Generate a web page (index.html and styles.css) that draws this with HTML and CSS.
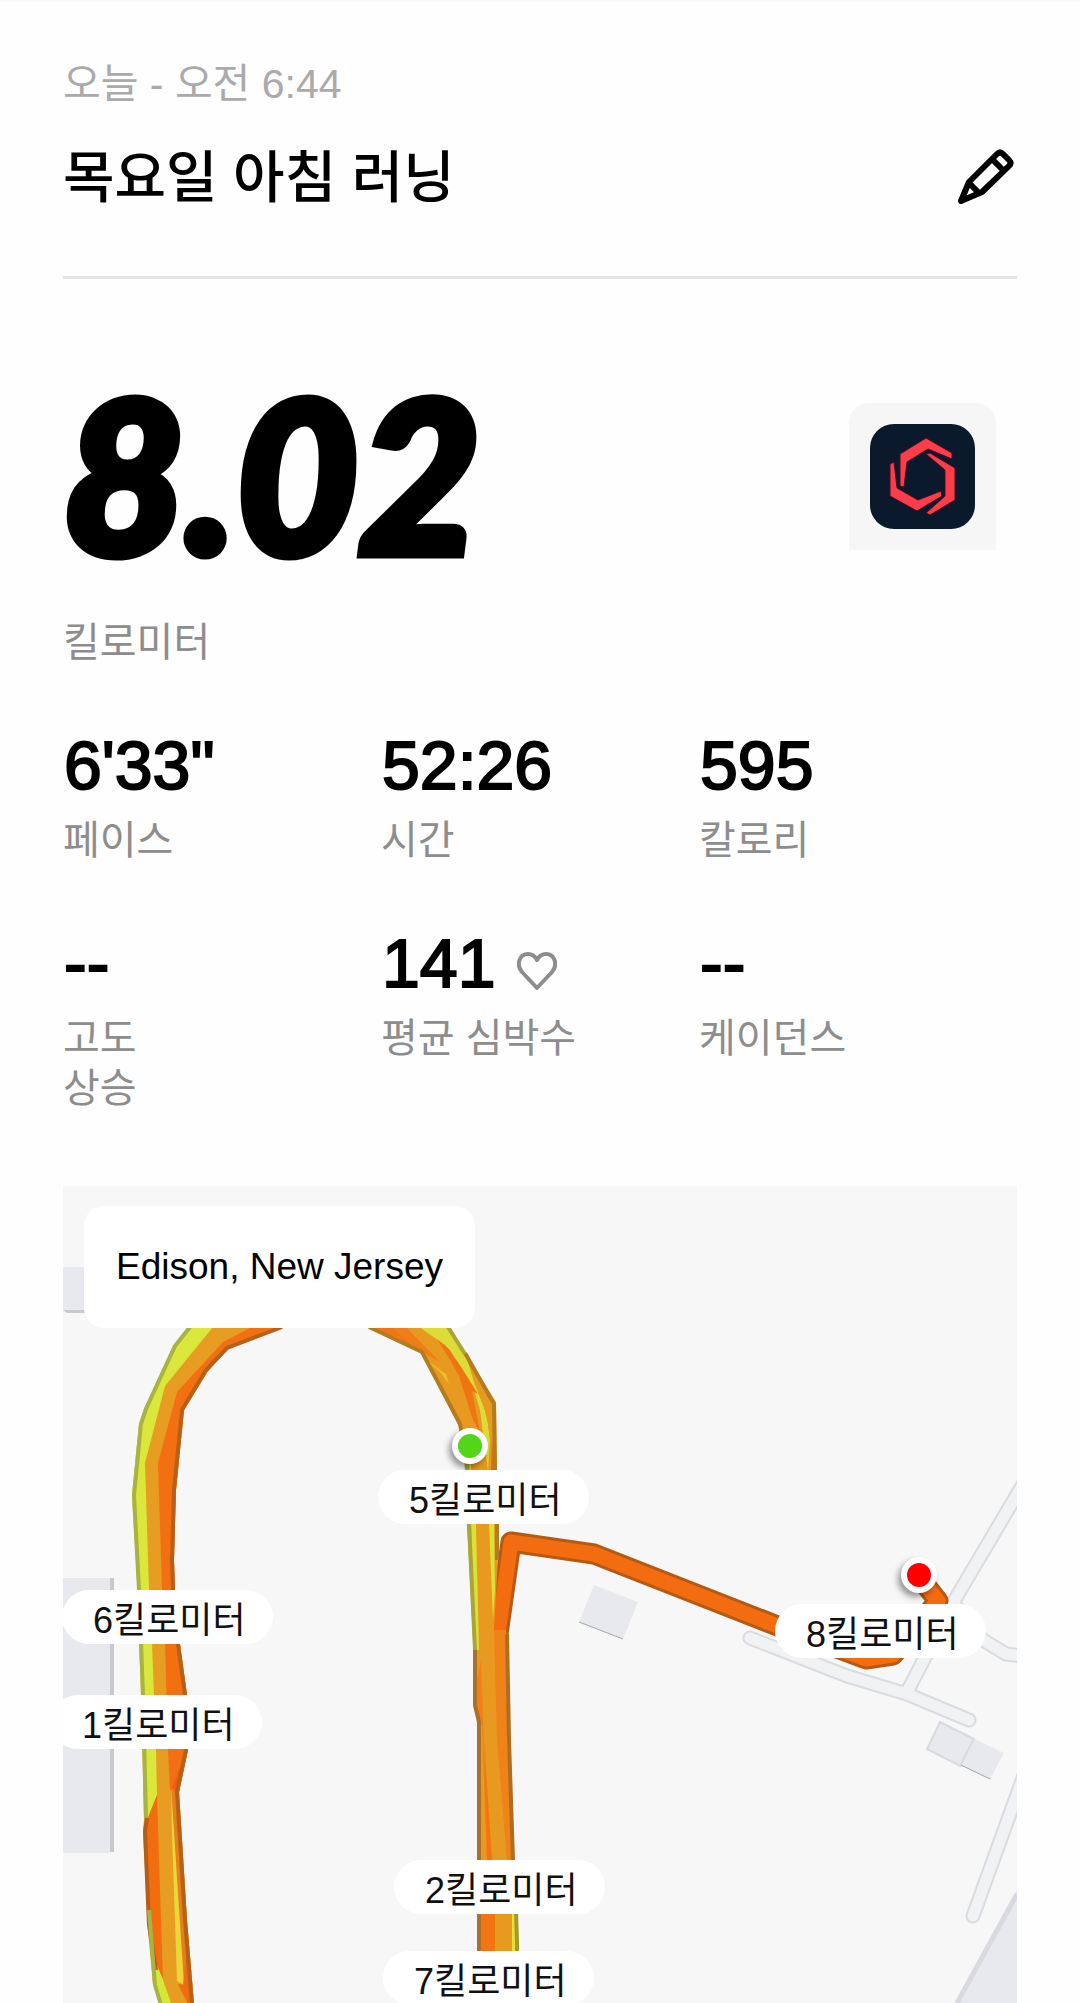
FILE: index.html
```html
<!DOCTYPE html>
<html lang="ko">
<head>
  <meta charset="UTF-8" />
  <meta name="viewport" content="width=device-width, initial-scale=1.0"/>
  <title>목요일 아침 러닝</title>
  <link rel="stylesheet" href="styles.css">
</head>
<body>

  <main class="run">
    <header class="run-header">
      <div>
        <p class="date">오늘 - 오전 6:44</p>
        <h1 class="title">목요일 아침 러닝</h1>
      </div>
      <button class="edit-btn" type="button" aria-label="편집">
        <svg viewBox="0 0 56 56" fill="none" stroke="#000" stroke-width="6" stroke-linejoin="round">
          <path d="M3 52 L11 33 L39 5 Q42 2 45 5 L51 11 Q54 14 51 17 L24 43 Z"/>
          <path d="M34 10 L46 22 M11 34 L21 44"/>
        </svg>
      </button>
    </header>

    <section class="summary">
      <div>
        <p class="distance">8.02</p>
        <p class="label">킬로미터</p>
      </div>
      <div class="badge">
        <svg viewBox="0 0 105 105">
          <rect width="105" height="105" rx="24" fill="#0a192b"/>
          <g fill="#fb3c4b" stroke="#4a0c20" stroke-width="1">
            <path d="M56 14 L82 29 L82 35 L58 25 L37 38 L34 63 L30 62 L30 30 Z"/>
            <path d="M56 30 L60 29 L85 44 L85 76 L60 91 L56 89 L75 72 L75 46 Z"/>
            <path d="M20 40 L24 38 L27 64 L48 76 L71 67 L72 72 L47 87 L20 72 Z"/>
          </g>
        </svg>
      </div>
    </section>

    <section class="stats">
      <div>
        <p class="value">6'33"</p>
        <p class="label">페이스</p>
      </div>
      <div>
        <p class="value">52:26</p>
        <p class="label">시간</p>
      </div>
      <div>
        <p class="value">595</p>
        <p class="label">칼로리</p>
      </div>
      <div>
        <p class="value">--</p>
        <p class="label">고도<br>상승</p>
      </div>
      <div>
        <p class="value">141
          <svg class="heart" viewBox="0 0 40 40" fill="none" stroke="#8d8d8d" stroke-width="4" stroke-linejoin="round">
            <path d="M20 37 L5 21 C-1 14 2 3 11 3 C15 3 18 5 20 9 C22 5 25 3 29 3 C38 3 41 14 35 21 Z"/>
          </svg>
        </p>
        <p class="label">평균 심박수</p>
      </div>
      <div>
        <p class="value">--</p>
        <p class="label">케이던스</p>
      </div>
    </section>

    <section class="map">
      <svg class="map-canvas" viewBox="63 1186 954 817">
        <!-- buildings -->
        <g fill="#e8e9ee">
          <path d="M63 1267 H90 V1311 H63 Z"/>
          <path d="M63 1578 H110 V1853 H63 Z"/>
          <path d="M594 1585 L638 1602 L623 1639 L579 1622 Z"/>
          <path d="M1017 1890 V2003 H955 Z"/>
          <path d="M975 1739 L1004 1753 L990 1779 L961 1766 Z"/>
          <path d="M940 1722 L974 1739 L960 1766 L927 1749 Z" stroke="#d8dae0" stroke-width="2"/>
        </g>
        <path d="M63 1310 H90 V1313 H67 Z M110 1578 H114 V1852 H110 Z" fill="#c8c9ce"/>
        <path d="M579 1622 L623 1639 M961 1765 L990 1779" stroke="#a5a6ab" fill="none"/>
        <path d="M1017 1894 L957 2003" stroke="#d9dae0" stroke-width="5" fill="none"/>

        <!-- roads -->
        <g fill="none" stroke-linecap="round" stroke-linejoin="round">
          <g stroke="#dadce0" stroke-width="15">
            <path d="M750 1638 L847 1676 L907 1694 L969 1720"/>
            <path d="M907 1692 L957 1596 L1025 1481"/>
            <path d="M955 1605 L983 1640 L1006 1654 L1030 1657"/>
            <path d="M973 1916 L1024 1775"/>
          </g>
          <g stroke="#f1f2f4" stroke-width="11">
            <path d="M750 1638 L847 1676 L907 1694 L969 1720"/>
            <path d="M907 1692 L957 1596 L1025 1481"/>
            <path d="M955 1605 L983 1640 L1006 1654 L1030 1657"/>
            <path d="M973 1916 L1024 1775"/>
          </g>
        </g>

        <!-- left side of the track -->
        <path fill="#e69d22" d="M188 1327 L173 1346 L144 1409 L139 1424 L132 1495 L137 1580 L141 1695 L144 1820 L143 1831 L148 1931 L153 1985 L160 2003 H194 L187 1920 L179 1792 L188 1750 L187 1695 L180 1644 L175 1590 L174 1560 L176 1490 L184 1410 L208 1371 L228 1349 L284 1327 Z"/>
        <path fill="#dbe73a" d="M188 1327 L173 1346 L144 1409 L139 1424 L132 1495 L137 1580 L141 1695 L145 1820 L148 1818 L157 1795 L156 1750 L152 1643 L149 1589 L145 1463 L165 1386 L213 1327 Z"/>
        <path fill="#f37012" d="M252 1327 L223 1342 L177 1392 L158 1463 L162 1589 L165 1643 L168 1750 L170 1790 L179 1792 L188 1750 L187 1695 L180 1644 L175 1590 L174 1560 L176 1490 L184 1410 L208 1371 L228 1349 L284 1327 Z"/>
        <path fill="#fb5a0c" d="M187 1750 L179 1792 L171 1790 Z"/>
        <path fill="#f26c10" d="M157 1795 L147 1820 L144 1832 L148 1925 L157 1968 L163 1978 L160 1890 Z"/>
        <path fill="#e5801a" d="M171 1788 L179 1792 L187 1920 L194 2003 H187 L178 1984 L183 1985 Z"/>
        <path fill="#ead83a" d="M171 1788 L175 1847 L184 1985 L177 1981 L172 1833 Z"/>
        <path fill="#f06c12" d="M178 1984 L183 1985 L187 1950 L193 2003 H188 Z"/>
        <path fill="#d5e83a" d="M157 1965 L153 1985 L160 2003 H171 L163 1980 Z"/>
        <g fill="none" stroke-width="4">
          <path stroke="#a7b443" d="M190 1327 L175 1346 L146 1409 L141 1424 L134 1495 L139 1590 L143 1695 L146 1818"/>
          <path stroke="#b45f18" d="M147 1818 L145 1831 L149 1925 L156 1970"/>
          <path stroke="#a7b443" d="M149 1910 L155 1985 L161 2005"/>
          <path stroke="#b8601a" d="M282 1327 L227 1348 L206 1370 L182 1410 L174 1490 L172 1560 L173 1590 L178 1644 L185 1695 L186 1750 L177 1792 L185 1920 L192 2005"/>
        </g>

        <!-- way out to the finish -->
        <g fill="none" stroke-linejoin="round">
          <path stroke="#b45a14" stroke-width="21" d="M498 1700 L498 1634 L511 1542 L594 1554 L775 1625 L866 1659 L893 1655 L938 1601 L917 1574"/>
          <path stroke="#f36c10" stroke-width="15" d="M498 1700 L498 1634 L511 1542 L594 1554 L775 1625 L866 1659 L893 1655 L938 1601 L917 1574"/>
        </g>

        <!-- right side of the track -->
        <path fill="#e8991f" d="M371 1327 L421 1353 L458 1424 L462 1440 L465 1470 L467 1524 L474 1660 L473 1705 L477 1720 V1960 H517 L514 1860 L510 1740 L508 1634 L494 1630 L499 1540 L497 1470 L496 1402 L465 1352 L450 1327 Z"/>
        <path fill="#f37512" d="M371 1327 H392 L418 1350 Z"/>
        <path fill="#ee7f18" d="M392 1327 H406 L440 1362 L418 1350 Z"/>
        <path fill="#dddb36" d="M419 1327 H449 L466 1356 L474 1382 L487 1416 L490 1440 L488 1470 L480 1410 L474 1390 L461 1367 L445 1345 Z"/>
        <path fill="#ee7612" d="M437 1339 L449 1349 L463 1370 L478 1394 L472 1391 L480 1432 L473 1420 L459 1376 L450 1360 Z"/>
        <path fill="#e8991f" d="M478 1380 L494 1405 L494 1470 L488 1424 Z"/>
        <path fill="#dc6f18" d="M492 1440 L495 1470 H491 Z"/>
        <path fill="#dedf38" d="M471 1524 H476 L479 1650 H475 Z M489 1524 H494 L495 1590 L493 1620 Z M466 1460 H471 V1470 H466 Z"/>
        <path fill="#e9c02c" d="M421 1356 L446 1374 L449 1384 L440 1372 Z"/>
        <path fill="#ef8218" d="M494 1630 H506 L508 1740 L512 1860 H507 L497 1740 Z M475 1690 L481 1660 L488 1860 H480 L478 1720 Z"/>
        <path fill="#e8991f" d="M477 1725 H482 L487 1860 H479 Z"/>
        <path fill="#f37512" d="M484 1740 L492 1860 H487 Z M480 1914 H495 V1960 H480 Z"/>
        <path fill="#e8e038" d="M512 1914 H515 V1960 H512 Z"/>
        <g fill="none" stroke-width="4">
          <path stroke="#b47c20" d="M369 1327 L422 1352 L460 1424 L464 1445 M465 1353 L494 1404 L495 1470 M497 1524 L497 1560"/>
          <path stroke="#a9a637" d="M448 1327 L465 1354 M467 1455 L469 1524 L475 1650"/>
          <path stroke="#a8722a" d="M475 1650 L475 1705 L479 1722 V1960"/>
          <path stroke="#b06c20" d="M507 1634 L509 1740 L513 1860"/>
          <path stroke="#a39a2c" d="M516 1910 L517 1942 V1960"/>
        </g>

        <!-- start and finish -->
        <g class="marker">
          <circle cx="470" cy="1446" r="18" fill="#fff"/>
          <circle cx="470" cy="1446" r="12" fill="#55d51a"/>
        </g>
        <g class="marker">
          <circle cx="919" cy="1575" r="18" fill="#fff"/>
          <circle cx="919" cy="1575" r="12" fill="#f00"/>
        </g>

        <!-- distance tags -->
        <g class="tag">
          <rect x="378" y="1470" width="211" height="54" rx="27"/>
          <text x="409" y="1513">5킬로미터</text>
        </g>
        <g class="tag">
          <rect x="62" y="1590" width="211" height="54" rx="27"/>
          <text x="93" y="1633">6킬로미터</text>
        </g>
        <g class="tag">
          <rect x="51" y="1695" width="211" height="54" rx="27"/>
          <text x="82" y="1738">1킬로미터</text>
        </g>
        <g class="tag">
          <rect x="775" y="1604" width="211" height="54" rx="27"/>
          <text x="806" y="1647">8킬로미터</text>
        </g>
        <g class="tag">
          <rect x="394" y="1860" width="211" height="54" rx="27"/>
          <text x="425" y="1903">2킬로미터</text>
        </g>
        <g class="tag">
          <rect x="383" y="1951" width="211" height="54" rx="27"/>
          <text x="414" y="1994">7킬로미터</text>
        </g>
      </svg>
      <p class="place">Edison, New Jersey</p>
    </section>
  </main>

</body>
</html>
```
FILE: styles.css
```css
* {
  box-sizing: border-box;
}

body {
  margin: 0;
  background: #fefefe;
  border-top: 2px solid #f9f9f9;
  color: #000;
  font-family: "Liberation Sans", "Noto Sans CJK KR", sans-serif;
}

p, h1 {
  margin: 0;
}

.run {
  padding: 57px 63px 0;
}

.run-header {
  display: flex;
  justify-content: space-between;
  align-items: flex-end;
  padding-bottom: 63px;
  border-bottom: 3px solid #e5e5e5;
}

.date {
  color: #aaa;
  font-size: 41px;
  line-height: 50px;
}

.title {
  margin-top: 34px;
  font-size: 56px;
  font-weight: 500;
  line-height: 70px;
}

.edit-btn {
  padding: 0 3px 8px;
  border: none;
  background: none;
  cursor: pointer;
}

.edit-btn svg {
  display: block;
  width: 56px;
  height: 56px;
}

.summary {
  display: flex;
  justify-content: space-between;
  align-items: flex-start;
  padding-top: 89px;
}

.distance {
  font-family: Lato, sans-serif;
  font-size: 211px;
  font-style: italic;
  font-weight: 900;
  line-height: 210px;
  -webkit-text-stroke: 9px #000;
}

.label {
  color: #8d8d8d;
  font-size: 40px;
  line-height: 50px;
}

.distance + .label {
  margin-top: 39px;
}

.badge {
  margin: 26px 21px 0 0;
  padding: 21px;
  border-radius: 20px 20px 0 0;
  background: #f6f6f6;
  position: relative;
  margin-top: 35px;
}

.badge svg {
  display: block;
  width: 105px;
  height: 105px;
}

.stats {
  display: grid;
  grid-template-columns: repeat(3, 1fr);
  row-gap: 62px;
  padding: 62px 0 73px;
}

.value {
  display: flex;
  align-items: center;
  gap: 22px;
  margin-bottom: 14px;
  padding-left: 1px;
  font-size: 68px;
  line-height: 72px;
  -webkit-text-stroke: 2px #000;
}

.heart {
  width: 40px;
  height: 40px;
  margin-top: 16px;
}

.map {
  position: relative;
  overflow: hidden;
  background: #f7f7f7;
}

.map-canvas {
  display: block;
  width: 100%;
}

.place {
  position: absolute;
  top: 20px;
  left: 21px;
  padding: 36px 32px;
  border-radius: 20px;
  background: #fff;
  font-size: 37px;
  line-height: 50px;
}

.marker {
  filter: drop-shadow(-3px 4px 3px rgba(0, 0, 0, 0.4));
}

.tag rect {
  fill: #fff;
}

.tag text {
  fill: #111;
  font-size: 36px;
}
```
